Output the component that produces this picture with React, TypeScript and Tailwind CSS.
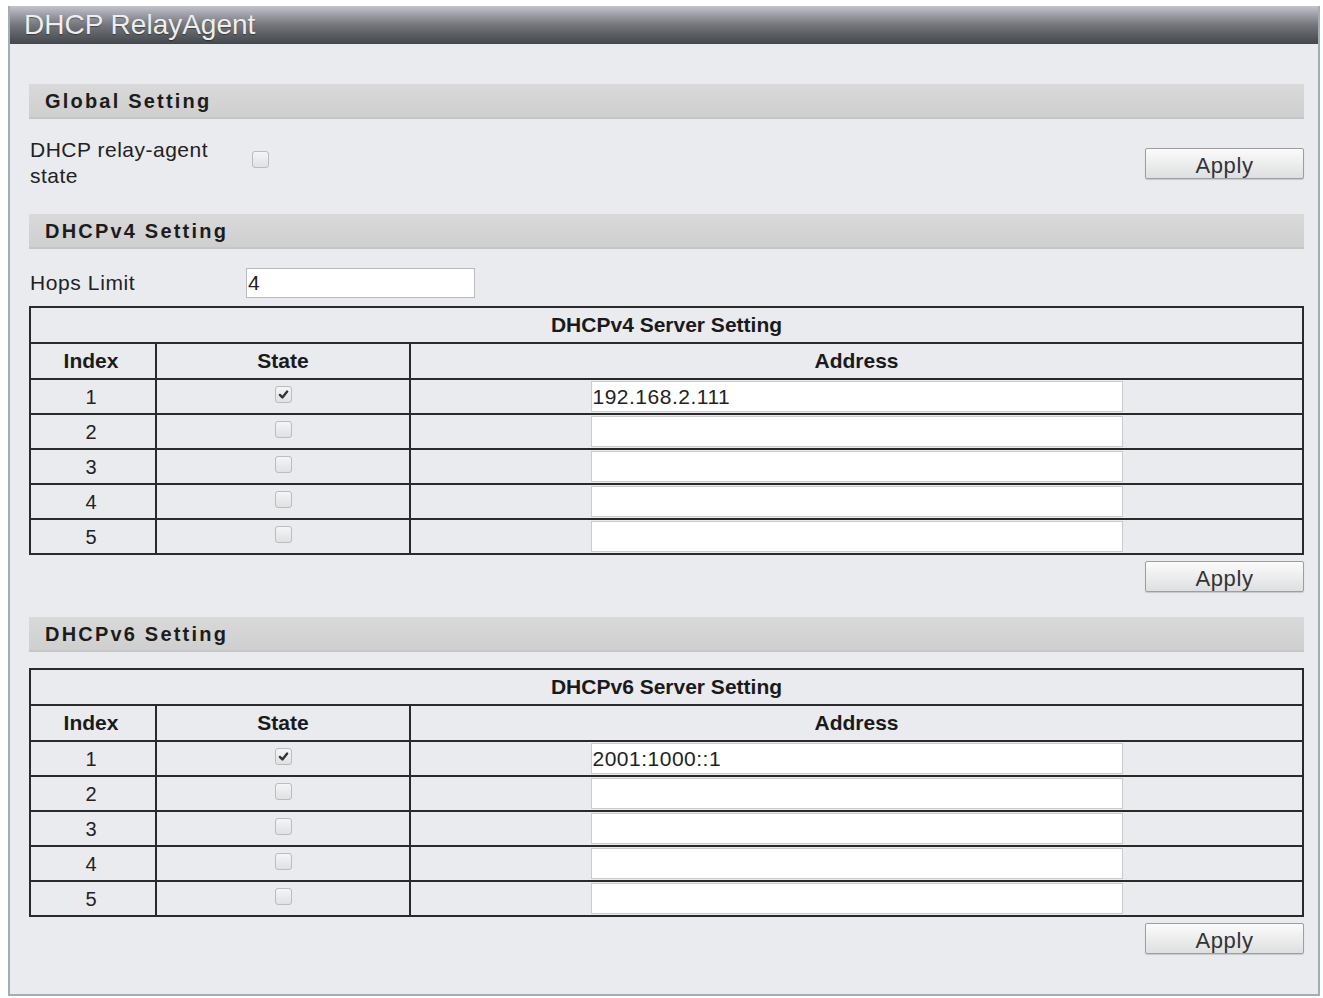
import React from 'react';

const font = { fontFamily: '"Liberation Sans", Arial, sans-serif' };

const CheckBox: React.FC<{ checked?: boolean }> = ({ checked }) => (
  <span className="inline-flex h-[17px] w-[17px] items-center justify-center rounded-[3px] border border-[#b9bcc0] bg-gradient-to-b from-[#f4f5f6] to-[#dfe1e3]">
    {checked && (
      <svg viewBox="0 0 12 12" className="h-[11px] w-[11px]">
        <path d="M2 6.5 L4.8 9.2 L10 2.8" fill="none" stroke="#333" strokeWidth="2.6" strokeLinecap="round" strokeLinejoin="round" />
      </svg>
    )}
  </span>
);

const SectionHeader: React.FC<{ title: string }> = ({ title }) => (
  <div className="flex h-[35px] items-center border-b-2 border-[#c4c6c8] bg-gradient-to-b from-[#d9d9d9] to-[#cfcfcf] pl-[16px]">
    <span className="text-[20px] font-bold tracking-[2.2px] text-[#1c1c1c]">{title}</span>
  </div>
);

const ApplyButton: React.FC = () => (
  <button className="h-[31px] w-[159px] rounded-[2px] border border-[#9c9ea0] bg-gradient-to-b from-[#fbfbfb] to-[#dedfe0] text-[22px] tracking-[0.6px] text-[#333] shadow-[0_1px_1px_rgba(0,0,0,0.15)]">
    Apply
  </button>
);

type ServerRow = { checked: boolean; address: string };

const ServerTable: React.FC<{ title: string; rows: ServerRow[] }> = ({ title, rows }) => (
  <table className="w-full table-fixed border-collapse border-2 border-[#2a2a2a]">
    <colgroup>
      <col className="w-[126px]" />
      <col className="w-[254px]" />
      <col />
    </colgroup>
    <thead>
      <tr className="h-[36px]">
        <th colSpan={3} className="border-2 border-[#2a2a2a] text-[21px] font-bold text-[#1a1a1a]">
          {title}
        </th>
      </tr>
      <tr className="h-[36px]">
        <th className="border-2 border-[#2a2a2a] pr-[4px] text-[21px] font-bold text-[#1a1a1a]">Index</th>
        <th className="border-2 border-[#2a2a2a] text-[21px] font-bold text-[#1a1a1a]">State</th>
        <th className="border-2 border-[#2a2a2a] text-[21px] font-bold text-[#1a1a1a]">Address</th>
      </tr>
    </thead>
    <tbody>
      {rows.map((r, i) => (
        <tr key={i} className="h-[35px]">
          <td className="border-2 border-[#2a2a2a] pr-[4px] text-center text-[20px] text-[#222]">{i + 1}</td>
          <td className="border-2 border-[#2a2a2a] text-center">
            <div className="flex justify-center pb-[4px]">
              <CheckBox checked={r.checked} />
            </div>
          </td>
          <td className="border-2 border-[#2a2a2a]">
            <div className="flex justify-center">
              <input
                readOnly
                value={r.address}
                className="h-[31px] w-[532px] border border-[#c9cbcd] bg-white px-[1px] text-[21px] tracking-[0.5px] text-[#222] outline-none"
                style={font}
              />
            </div>
          </td>
        </tr>
      ))}
    </tbody>
  </table>
);

const v4Rows: ServerRow[] = [
  { checked: true, address: '192.168.2.111' },
  { checked: false, address: '' },
  { checked: false, address: '' },
  { checked: false, address: '' },
  { checked: false, address: '' },
];

const v6Rows: ServerRow[] = [
  { checked: true, address: '2001:1000::1' },
  { checked: false, address: '' },
  { checked: false, address: '' },
  { checked: false, address: '' },
  { checked: false, address: '' },
];

export default function App() {
  return (
    <div className="min-h-[998px] w-[1323px] bg-white pl-[8px] pr-[3px] pt-[6px]" style={font}>
      <div className="flex h-[990px] flex-col border-x-2 border-b-2 border-[#a3adb7] bg-[#e9ebee]">
        <div className="flex h-[38px] items-center bg-gradient-to-b from-[#c4c4cc] via-[#74767c] to-[#44474b] pl-[14px]">
          <span className="text-[28px] text-[#eeeeee] [text-shadow:0_1px_1px_rgba(0,0,0,0.4)]">DHCP RelayAgent</span>
        </div>

        <div className="flex flex-col pl-[19px] pr-[14px] pt-[40px]">
          <SectionHeader title="Global Setting" />
          <div className="flex h-[88px] items-center text-[21px] tracking-[0.5px] text-[#222]">
            <div className="w-[223px] pl-[1px] leading-[26px]">
              DHCP relay-agent
              <br />
              state
            </div>
            <div className="flex-1 pb-[4px]">
              <CheckBox />
            </div>
            <ApplyButton />
          </div>

          <div className="mt-[7px]">
            <SectionHeader title="DHCPv4 Setting" />
          </div>
          <div className="mt-[19px] flex h-[30px] items-center text-[21px] tracking-[0.6px] text-[#222]">
            <div className="w-[217px] pl-[1px]">Hops Limit</div>
            <input
              readOnly
              value="4"
              className="h-[30px] w-[229px] border border-[#b8babc] bg-white px-[1px] text-[21px] text-[#222] outline-none"
              style={font}
            />
          </div>
          <div className="mt-[8px]">
            <ServerTable title="DHCPv4 Server Setting" rows={v4Rows} />
          </div>
          <div className="mt-[6px] flex justify-end">
            <ApplyButton />
          </div>

          <div className="mt-[25px]">
            <SectionHeader title="DHCPv6 Setting" />
          </div>
          <div className="mt-[16px]">
            <ServerTable title="DHCPv6 Server Setting" rows={v6Rows} />
          </div>
          <div className="mt-[6px] flex justify-end">
            <ApplyButton />
          </div>
        </div>
      </div>
    </div>
  );
}
